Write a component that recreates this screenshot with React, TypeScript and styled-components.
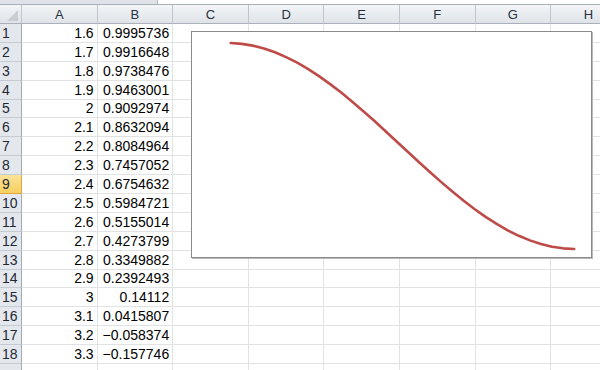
import styled, { createGlobalStyle } from "styled-components"

const COL_W = 75.6
const ROW_H = 18.9
const columns = ["A", "B", "C", "D", "E", "F", "G", "H"]

const rows: [string, string][] = [
    ["1.6", "0.9995736"],
    ["1.7", "0.9916648"],
    ["1.8", "0.9738476"],
    ["1.9", "0.9463001"],
    ["2", "0.9092974"],
    ["2.1", "0.8632094"],
    ["2.2", "0.8084964"],
    ["2.3", "0.7457052"],
    ["2.4", "0.6754632"],
    ["2.5", "0.5984721"],
    ["2.6", "0.5155014"],
    ["2.7", "0.4273799"],
    ["2.8", "0.3349882"],
    ["2.9", "0.2392493"],
    ["3", "0.14112"],
    ["3.1", "0.0415807"],
    ["3.2", "−0.058374"],
    ["3.3", "−0.157746"]
]

// sin(x) for x = 1.6 .. 4.7, mapped into the chart box
const curve = Array.from({ length: 32 }, (_, i) => {
    const x = 1.6 + i * 0.1
    const px = 38.5 + (i / 31) * 345
    const py = 114.5 - Math.sin(x) * 103.5
    return `${px.toFixed(1)},${py.toFixed(1)}`
}).join(" ")

const GlobalStyle = createGlobalStyle`
    html, body {
        margin: 0;
        padding: 0;
        background: #fff;
        overflow: hidden;
    }
    body {
        font-family: "Liberation Sans", Arial, sans-serif;
    }
`

export default function App() {
    return <Page>
        <GlobalStyle />
        <FormulaStrip>
            <NameBox />
            <FormulaBox />
        </FormulaStrip>
        <Sheet>
            <Grid>
                <Corner><CornerMark /></Corner>
                {columns.map(c => <ColHeader key={c}>{c}</ColHeader>)}
                {rows.map((r, i) => [
                    <RowHeader key={`h${i}`} $active={i === 8}>{i + 1}</RowHeader>,
                    ...columns.map((c, j) =>
                        <Cell key={`${i}${c}`}>{j < 2 ? r[j] : ""}</Cell>)
                ])}
                {/* partly visible row 19 */}
                <RowHeader />
                {columns.map(c => <Cell key={`last${c}`} />)}
            </Grid>
            <Chart>
                <svg width="100%" height="100%" viewBox="0 0 400 226">
                    <polyline points={curve} fill="none" stroke="#be4b48" strokeWidth="2.6" strokeLinejoin="round" strokeLinecap="round" />
                </svg>
            </Chart>
        </Sheet>
    </Page>
}

const Page = styled.div`
    width: 600px;
    height: 370px;
    overflow: hidden;
    background: #fff;
`

const FormulaStrip = styled.div`
    display: flex;
    height: 4px;
    border-bottom: 1px solid #a9b0b9;
    background: #dfe3e8;
`

const NameBox = styled.div`
    width: 157px;
`

const FormulaBox = styled.div`
    flex: 1;
    background: #fff;
    border-left: 1px solid #b3b9c1;
`

const Sheet = styled.div`
    position: relative;
`

const Grid = styled.div`
    display: grid;
    grid-template-columns: 22px repeat(8, ${COL_W}px);
    grid-template-rows: 19px repeat(19, ${ROW_H}px);
    font-size: 14px;
    color: #000;
`

const Corner = styled.div`
    position: relative;
    background: linear-gradient(#f3f5f7, #dfe3e8);
    border-right: 1px solid #c0c6ce;
    border-bottom: 1px solid #a9b0b9;
`

const CornerMark = styled.div`
    position: absolute;
    right: 3px;
    bottom: 2px;
    width: 0;
    height: 0;
    border-left: 11px solid transparent;
    border-bottom: 11px solid #c9ced5;
`

const ColHeader = styled.div`
    display: flex;
    align-items: center;
    justify-content: center;
    background: linear-gradient(#f3f5f7, #dfe3e8);
    border-right: 1px solid #c0c6ce;
    border-bottom: 1px solid #a9b0b9;
    font-size: 13px;
    color: #27313d;
    padding-top: 1px;
`

const RowHeader = styled.div<{ $active?: boolean }>`
    display: flex;
    align-items: flex-end;
    padding: 0 0 1px 2px;
    background: ${p => p.$active ? "linear-gradient(#fbe39a, #f7cf5f)" : "#e4e8ed"};
    border-right: 1px solid ${p => p.$active ? "#e2a73c" : "#9faab7"};
    border-bottom: 1px solid ${p => p.$active ? "#e2a73c" : "#c5cbd3"};
    font-size: 14px;
    color: #1e2836;
    overflow: hidden;
`

const Cell = styled.div`
    display: flex;
    align-items: flex-end;
    justify-content: flex-end;
    padding: 0 3px 1px 0;
    border-right: 1px solid #e1e2e4;
    border-bottom: 1px solid #e1e2e4;
    white-space: nowrap;
    overflow: hidden;
`

const Chart = styled.div`
    position: absolute;
    left: 191px;
    top: 26px;
    width: 399px;
    height: 225px;
    background: #fff;
    border: 1px solid #8a8a8a;
    box-shadow: 1px 1px 0 #b9b9b9;
`
